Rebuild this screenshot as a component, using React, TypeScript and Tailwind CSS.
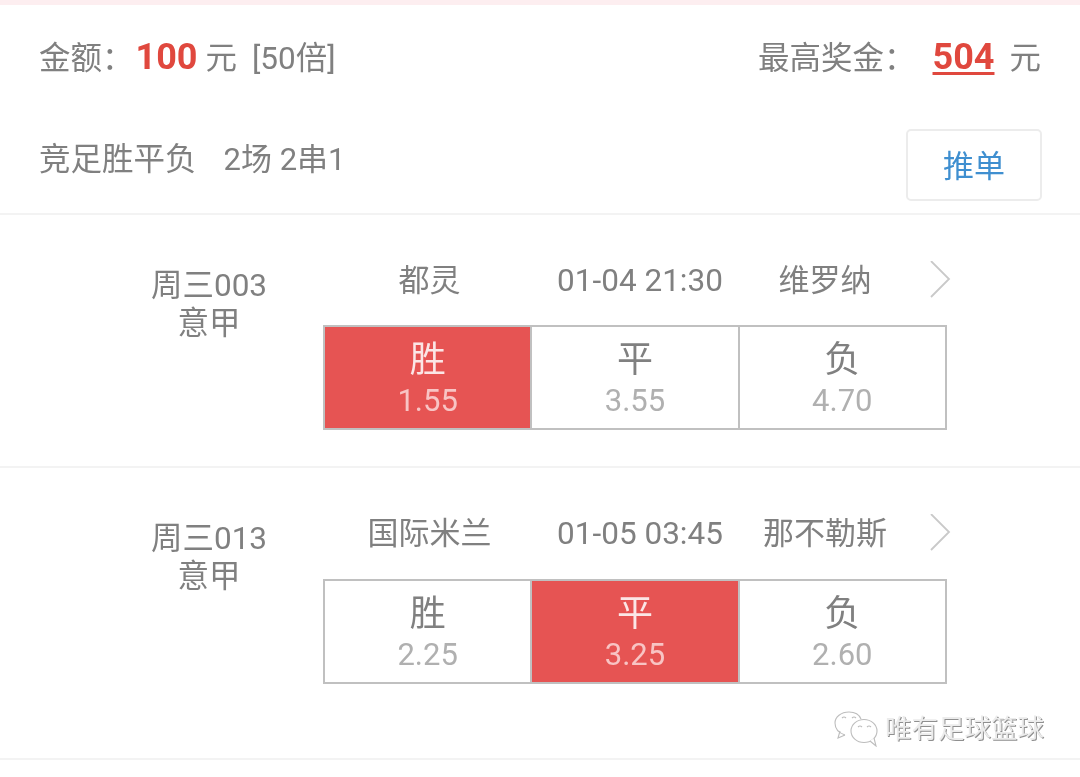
import React from 'react';

const FONT = "font-['Roboto','Noto_Sans_CJK_SC',sans-serif]";

type Odd = { label: string; value: string; picked?: boolean };

type Match = {
  code: string;
  league: string;
  home: string;
  away: string;
  time: string;
  odds: Odd[];
};

const MATCHES: Match[] = [
  {
    code: '周三003',
    league: '意甲',
    home: '都灵',
    away: '维罗纳',
    time: '01-04 21:30',
    odds: [
      { label: '胜', value: '1.55', picked: true },
      { label: '平', value: '3.55' },
      { label: '负', value: '4.70' },
    ],
  },
  {
    code: '周三013',
    league: '意甲',
    home: '国际米兰',
    away: '那不勒斯',
    time: '01-05 03:45',
    odds: [
      { label: '胜', value: '2.25' },
      { label: '平', value: '3.25', picked: true },
      { label: '负', value: '2.60' },
    ],
  },
];

const MatchRow: React.FC<{ match: Match; last?: boolean }> = ({ match, last }) => (
  <div className={`flex border-b-2 border-[#f3f3f3] ${last ? 'h-[292px]' : 'h-[253px]'}`}>
    {/* League */}
    <div className="w-[323px] shrink-0 pl-[95px] pt-[52px] text-center text-[31.5px] leading-[38px] text-[#808080]">
      <div>{match.code}</div>
      <div>{match.league}</div>
    </div>

    <div className="pt-[46px]">
      {/* Teams */}
      <div className="flex h-[40px] items-center text-center text-[31px] text-[#808080]">
        <div className="w-[213px]">{match.home}</div>
        <div className="w-[208px] text-[31.5px]">{match.time}</div>
        <div className="w-[162px] whitespace-nowrap">{match.away}</div>
        <svg className="ml-[24px] h-[40px] w-[22px]" viewBox="0 0 22 40" fill="none">
          <path d="M1 0 L19 18 L1 36" stroke="#c9c9c9" strokeWidth="1.8" />
        </svg>
      </div>

      {/* Odds */}
      <div className={`flex h-[105px] w-[624px] border-2 border-[#c0c0c0] ${last ? 'mt-[25px]' : 'mt-[24px]'}`}>
        {match.odds.map((odd, i) => (
          <div
            key={odd.label}
            className={`flex flex-1 flex-col items-center justify-center ${i > 0 ? 'border-l-2 border-[#c0c0c0]' : ''} ${odd.picked ? 'bg-[#e65453]' : 'bg-white'}`}
          >
            <div className={`pt-[2px] text-[36px] leading-[44px] ${odd.picked ? 'text-[#fbe6e6]' : 'text-[#808080]'}`}>
              {odd.label}
            </div>
            <div className={`text-[31px] leading-[38px] ${odd.picked ? 'text-[#f8c4c4]' : 'text-[#b0b0b0]'}`}>
              {odd.value}
            </div>
          </div>
        ))}
      </div>
    </div>
  </div>
);

export default function App() {
  return (
    <div className={`relative h-[777px] w-[1080px] overflow-hidden bg-white blur-[0.5px] ${FONT}`}>
      <div className="h-[5px] bg-[#fdeef0]" />

      {/* Summary */}
      <div className="flex h-[104px] items-center justify-between px-[39px] text-[31.5px] text-[#808080]">
        <div className="flex items-baseline whitespace-nowrap">
          <span>金额：</span>
          <span className="text-[36px] ml-[2px] font-bold text-[#e0483e]">100</span>
          <span className="ml-[8px]">元</span>
          <span className="ml-[15px]">[50倍]</span>
        </div>
        <div className="flex items-baseline whitespace-nowrap">
          <span>最高奖金：</span>
          <span className="ml-[17px] text-[36px] font-bold text-[#e0483e] underline underline-offset-[3px]">504</span>
          <span className="ml-[15px]">元</span>
        </div>
      </div>

      <div className="flex h-[106px] items-start justify-between border-b-2 border-[#f3f3f3] pl-[39px] pr-[38px] pt-[20px]">
        <div className="whitespace-nowrap pt-[9px] text-[31.5px] leading-[44px] text-[#808080]">
          <span>竞足胜平负</span>
          <span className="ml-[27px] text-[31px]">2场 2串1</span>
        </div>
        <button className="h-[72px] w-[136px] rounded-[5px] border-2 border-[#ececec] bg-white pt-[5px] text-[31px] text-[#3f8fd0]">
          推单
        </button>
      </div>

      {MATCHES.map((match, i) => (
        <MatchRow key={match.code} match={match} last={i === MATCHES.length - 1} />
      ))}

      {/* Watermark */}
      <div className="absolute left-[834px] top-[711px] flex items-center gap-[7px]">
        <svg className="h-[36px] w-[44px]" viewBox="0 0 44 36" fill="none" stroke="#bdbdbd" strokeWidth="1.1">
          <path d="M11 24 C5 22 1 18 1 12 C1 6 7 1 15 1 C21 1 25 3 27 8" />
          <path d="M6 20 L4 27 L11 24" />
          <ellipse cx="30" cy="20" rx="13" ry="11.5" fill="#ffffff" />
          <path d="M36 30 L42 35 L40 27" fill="#ffffff" />
          <path d="M8 7 q2 -2 4 0 M18 7 q2 -2 4 0 M24 16 q2 -2 4 0 M33 16 q2 -2 4 0" />
        </svg>
        <span className="whitespace-nowrap text-[26.5px] leading-[36px] text-[#ececec] [text-shadow:1px_1px_0_#8f8f8f]">
          唯有足球篮球
        </span>
      </div>
    </div>
  );
}
